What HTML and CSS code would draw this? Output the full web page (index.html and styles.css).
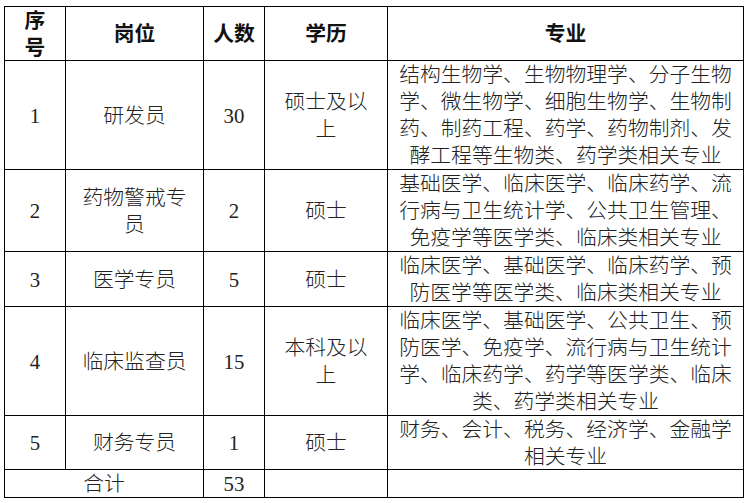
FILE: index.html
```html
<!DOCTYPE html>
<html lang="zh-CN">
<head>
<meta charset="utf-8">
<title>招聘岗位</title>
<link rel="stylesheet" href="styles.css">
</head>
<body>
<div class="sheet">
  <div class="c h">序<br>号</div>
  <div class="c h">岗位</div>
  <div class="c h">人数</div>
  <div class="c h">学历</div>
  <div class="c h">专业</div>

  <div class="c">1</div>
  <div class="c">研发员</div>
  <div class="c">30</div>
  <div class="c">硕士及以<br>上</div>
  <div class="c">结构生物学、生物物理学、分子生物<br>学、微生物学、细胞生物学、生物制<br>药、制药工程、药学、药物制剂、发<br>酵工程等生物类、药学类相关专业</div>

  <div class="c">2</div>
  <div class="c">药物警戒专<br>员</div>
  <div class="c">2</div>
  <div class="c">硕士</div>
  <div class="c">基础医学、临床医学、临床药学、流<br>行病与卫生统计学、公共卫生管理、<br>免疫学等医学类、临床类相关专业</div>

  <div class="c">3</div>
  <div class="c">医学专员</div>
  <div class="c">5</div>
  <div class="c">硕士</div>
  <div class="c">临床医学、基础医学、临床药学、预<br>防医学等医学类、临床类相关专业</div>

  <div class="c">4</div>
  <div class="c">临床监查员</div>
  <div class="c">15</div>
  <div class="c">本科及以<br>上</div>
  <div class="c">临床医学、基础医学、公共卫生、预<br>防医学、免疫学、流行病与卫生统计<br>学、临床药学、药学等医学类、临床<br>类、药学类相关专业</div>

  <div class="c">5</div>
  <div class="c">财务专员</div>
  <div class="c">1</div>
  <div class="c">硕士</div>
  <div class="c">财务、会计、税务、经济学、金融学<br>相关专业</div>

  <div class="c span2">合计</div>
  <div class="c">53</div>
  <div class="c"></div>
  <div class="c"></div>
</div>
</body>
</html>
```

FILE: styles.css
```css
html, body {
  margin: 0;
  padding: 0;
  background: #ffffff;
}

body {
  padding: 6px 0 0 4px;
  font-family: "Liberation Serif", "Noto Sans CJK SC", serif;
  font-size: 20.8px;
  font-weight: 300;
  color: #222222;
}

.sheet {
  display: grid;
  grid-template-columns: 61px 138px 61px 123px 356px;
  grid-template-rows: 54px 109px 82px 55px 109px 54px 28px;
  width: max-content;
  border-left: 1px solid #000;
  border-top: 1px solid #000;
}

.c {
  box-sizing: border-box;
  border-right: 1px solid #000;
  border-bottom: 1px solid #000;
  display: flex;
  align-items: center;
  justify-content: center;
  text-align: center;
  line-height: 27px;
  white-space: nowrap;
}

.h {
  font-weight: 700;
  color: #111111;
}

.span2 {
  grid-column: span 2;
}
```
